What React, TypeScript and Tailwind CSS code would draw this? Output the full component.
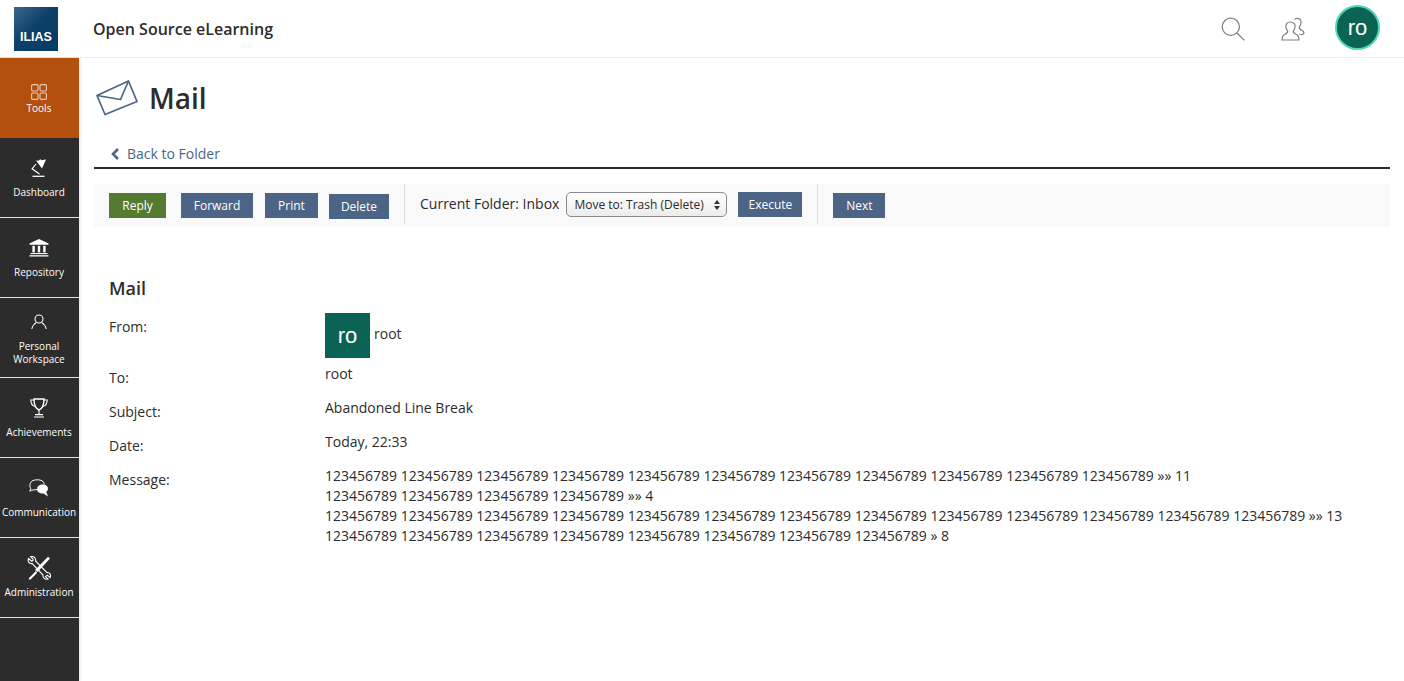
const font = { fontFamily: '"Open Sans", sans-serif' };
const avatarFont = { fontFamily: '"Liberation Sans", sans-serif' };

function ToolsIcon() {
  return (
    <svg width="16" height="16" viewBox="0 0 16 16" fill="none" stroke="#eccdb6" strokeWidth="1.1">
      <rect x="0.6" y="0.6" width="6.4" height="6.4" rx="1.2" />
      <rect x="9" y="0.6" width="6.4" height="6.4" rx="1.2" />
      <rect x="0.6" y="9" width="6.4" height="6.4" rx="1.2" />
      <rect x="9" y="9" width="6.4" height="6.4" rx="1.2" />
    </svg>
  );
}

function DashboardIcon() {
  return (
    <svg width="16" height="20" viewBox="0 0 16 20" fill="none" stroke="#fff" strokeWidth="1.1">
      <path d="M5 2.5 L7.5 2.8 L9.5 1 L10 2.2 L15 1.5 L11 10.5 Z" fill="#fff" stroke="none" />
      <path d="M5 6 L1 10.8 L8.5 16" />
      <path d="M1.5 18.3 H13.5" strokeWidth="1.3" />
    </svg>
  );
}

function RepositoryIcon() {
  return (
    <svg width="20" height="18" viewBox="0 0 20 18" fill="#fff">
      <path d="M10 0 L19.5 4.6 V5.8 H0.5 V4.6 Z" />
      <rect x="3.4" y="6.8" width="2.4" height="6.6" />
      <rect x="8.8" y="6.8" width="2.4" height="6.6" />
      <rect x="14.2" y="6.8" width="2.4" height="6.6" />
      <rect x="1.5" y="14" width="17" height="1.1" />
      <rect x="0.5" y="16.2" width="19" height="1.3" />
    </svg>
  );
}

function PersonIcon() {
  return (
    <svg width="16" height="16" viewBox="0 0 16 16" fill="none" stroke="#fff" strokeWidth="1.1">
      <circle cx="8" cy="5" r="4" />
      <path d="M5.2 8.6 C3 10 1.5 11.5 0.8 15 M10.8 8.6 C13 10 14.5 11.5 15.2 15" />
    </svg>
  );
}

function TrophyIcon() {
  return (
    <svg width="18" height="20" viewBox="0 0 18 20" fill="none" stroke="#fff" strokeWidth="1.1">
      <path d="M4 1 H14 C14 6 13.5 10 9 12 C4.5 10 4 6 4 1 Z" fill="#2c2c2c" strokeWidth="1.4" />
      <path d="M4 2 H0.8 C0.8 5 2 7.5 5 8.5 M14 2 H17.2 C17.2 5 16 7.5 13 8.5" />
      <path d="M9 12 V17" />
      <path d="M5 16.6 H13 M4 19 H14" />
    </svg>
  );
}

function CommunicationIcon() {
  return (
    <svg width="20" height="19" viewBox="0 0 20 19" fill="none" stroke="#fff" strokeWidth="1">
      <path d="M8.5 10.5 C5 11 2.6 11 2.2 11.5 L0.8 12.2 L1.8 9.5 C0.5 8 0.3 3 4 1.5 C7 0.4 12 0.4 14 2.5 C15 3.5 15.2 4.6 15 5.5" />
      <path d="M12.5 5.5 C16 5.2 19 6.8 19 9.5 C19 11 18.3 12 17.2 12.8 L19 17.5 L14.5 14.5 C11 14.8 8 13 8 10 C8 7.5 10 5.7 12.5 5.5 Z" fill="#fff" stroke="none" />
    </svg>
  );
}

function AdminIcon() {
  return (
    <svg width="24" height="24" viewBox="0 0 24 24" fill="none" stroke="#fff">
      <path d="M23 2.5 L21 0.8 L8 14 L10.5 16 Z" fill="#fff" stroke="none" />
      <path d="M2 22 L9 15 L10 17 L3.5 23.5 C2.5 24 1.3 23 2 22 Z" fill="#fff" stroke="none" />
      <path d="M1.5 2.5 L4.8 5.2 L6 4.4 L6 3 L3.6 0.8 C6 -0.2 9.2 1.6 8.6 5 L20 16.6 C22.6 16 24.4 19 23 21.6 L20.4 19.2 L18.6 20.6 L21 23 C18 24 15.4 21.6 16 19 L5 7.4 C2.5 8.2 0.4 5.6 1.5 2.5 Z" strokeWidth="1.1" />
    </svg>
  );
}

function MailIcon() {
  return (
    <svg width="42" height="36" viewBox="0 0 42 36" fill="none" stroke="#4c6586" strokeWidth="1.7" strokeLinejoin="round">
      <path d="M1 15.5 L32.5 1 L41 21.5 L9 34.5 Z" />
      <path d="M1 15.5 L24.5 19.5 L32.5 1" />
    </svg>
  );
}

function SearchIcon() {
  return (
    <svg width="24" height="24" viewBox="0 0 24 24" fill="none" stroke="#7f7f7f" strokeWidth="1.3">
      <circle cx="9.8" cy="9.8" r="8.6" />
      <path d="M16 16 L23.4 23.4" />
    </svg>
  );
}

function UsersIcon() {
  return (
    <svg width="24" height="24" viewBox="0 0 24 24" fill="none" stroke="#7f7f7f" strokeWidth="1.2" strokeLinejoin="round">
      <path d="M13.5 2.5 C14.5 0.8 18.5 0.8 19.5 3 C20.5 5.3 19.5 8.5 18.3 10 C18 11.5 19 12.5 21 13.5 C23.3 14.6 23.6 16.5 21.5 17.5 H18.5" />
      <path d="M9.5 5 C13 5 14.5 7.5 14 10.5 C13.7 12 13 13.3 12.3 14 C12 15.5 13 16.3 15 17.3 C17.3 18.4 18 19.5 18 23 H1 C1 19.5 1.8 18.4 4 17.3 C6 16.3 7 15.5 6.7 14 C6 13.3 5.3 12 5 10.5 C4.5 7.5 6 5 9.5 5 Z" />
    </svg>
  );
}

const navItems = [
  { label: "Dashboard", icon: <DashboardIcon /> },
  { label: "Repository", icon: <RepositoryIcon /> },
  { label: "Personal Workspace", icon: <PersonIcon /> },
  { label: "Achievements", icon: <TrophyIcon /> },
  { label: "Communication", icon: <CommunicationIcon /> },
  { label: "Administration", icon: <AdminIcon /> },
];

const rows = [
  { label: "To:", value: "root" },
  { label: "Subject:", value: "Abandoned Line Break" },
  { label: "Date:", value: "Today, 22:33" },
];

const n = "123456789";
const messageLines = [
  Array(11).fill(n).join(" ") + " »» 11",
  Array(4).fill(n).join(" ") + " »» 4",
  Array(13).fill(n).join(" ") + " »» 13",
  Array(8).fill(n).join(" ") + " » 8",
];

function Btn({ children, className = "" }: { children: string; className?: string }) {
  return (
    <button className={`h-[25px] bg-[#4c6586] text-[12px] text-white ${className}`}>{children}</button>
  );
}

export default function App() {
  return (
    <div style={font} className="flex h-[681px] w-[1404px] flex-col overflow-hidden bg-white text-[14px] text-[#2c2c2c]">
      <header className="flex h-[58px] shrink-0 items-center border-b border-[#ececec] pr-[24px]">
        <div className="ml-[14px] flex h-[44px] w-[44px] items-end justify-center bg-[linear-gradient(135deg,#3d6690_0%,#0d4068_45%,#033c66_100%)] pb-[7px] text-[12.5px] leading-none font-bold text-white" style={avatarFont}>
          ILIAS
        </div>
        <div className="ml-[35px] text-[16px] font-semibold">Open Source eLearning</div>
        <div className="ml-auto flex items-center">
          <SearchIcon />
          <div className="ml-[36px]"><UsersIcon /></div>
          <div style={avatarFont} className="mb-[3px] ml-[30px] flex h-[45px] w-[45px] items-center justify-center rounded-full border-2 border-[#4fd8b8] bg-[#0b6353] text-[22px] text-white">ro</div>
        </div>
      </header>

      <div className="flex min-h-0 flex-1">
        <nav className="relative w-[79px] shrink-0 bg-[#2c2c2c] pr-[1px] text-white shadow-[1px_0_3px_rgba(0,0,0,0.12)]">
          <div className="-mr-[1px] flex h-[80px] flex-col items-center bg-[#b54f0e] pt-[26px] pr-[1px]">
            <ToolsIcon />
            <span className="mt-[1px] text-[10px] leading-[14px]">Tools</span>
          </div>
          {navItems.map((item) => (
            <div key={item.label} className="-mr-[1px] flex h-[80px] flex-col items-center justify-center border-b border-[#e0e0e0] pr-[1px] text-center">
              <div className="flex h-[24px] w-full shrink-0 items-center justify-center">{item.icon}</div>
              <span className="mt-[6px] text-[10px] leading-[13px]">{item.label}</span>
            </div>
          ))}
        </nav>

        <main className="min-w-0 flex-1 pl-[15px] pr-[14px]">
          <div className="flex h-[80px] items-start pt-[22px] pl-[2px]">
            <MailIcon />
            <h1 className="ml-[11px] text-[28px] leading-[36px] font-semibold">Mail</h1>
          </div>
          <div className="flex h-[31px] items-center border-b-2 border-[#2c2c2c] pt-[2px] pl-[16px] text-[#4c6586]">
            <svg width="10" height="12" viewBox="0 0 10 12" fill="none" stroke="#4c6586" strokeWidth="2.6"><path d="M8 1 L3 6 L8 11" /></svg>
            <span className="ml-[7px]">Back to Folder</span>
          </div>

          <div className="mt-[15px] flex h-[43px] items-start bg-[#f9f9f9] pl-[15px]">
            <Btn className="mt-[9px] w-[57px] !bg-[#557a32]">Reply</Btn>
            <Btn className="mt-[9px] ml-[15px] w-[72px]">Forward</Btn>
            <Btn className="mt-[9px] ml-[12px] w-[53px]">Print</Btn>
            <Btn className="mt-[10px] ml-[11px] w-[60px]">Delete</Btn>
            <div className="ml-[15px] h-[40px] w-px bg-[#dedede]" />
            <span className="mt-[10px] ml-[15px] text-[14px] leading-[20px]">Current Folder: Inbox</span>
            <div className="relative mt-[8px] ml-[7px] h-[25px] w-[161px]">
              <select style={font} className="h-full w-full appearance-none rounded-[5px] border border-[#8a8a8a] bg-[linear-gradient(#ffffff,#ececec)] pl-[7px] text-[12px] text-[#2c2c2c]">
                <option>Move to: Trash (Delete)</option>
              </select>
              <svg className="absolute top-[8px] right-[7px]" width="6" height="10" viewBox="0 0 6 10" fill="#333"><path d="M3 0 L6 4 H0 Z M3 10 L6 6 H0 Z" /></svg>
            </div>
            <Btn className="mt-[8px] ml-[11px] w-[64px]">Execute</Btn>
            <div className="ml-[15px] h-[40px] w-px bg-[#dedede]" />
            <Btn className="mt-[9px] ml-[15px] w-[52px]">Next</Btn>
          </div>

          <div className="pt-[50px] pl-[15px]">
            <h2 className="text-[18px] leading-[22px] font-semibold">Mail</h2>
            <div className="mt-[14px] grid grid-cols-[216px_1fr] leading-[20px]">
              <div className="pt-[4px]">From:</div>
              <div className="flex items-start">
                <div style={avatarFont} className="flex h-[45px] w-[45px] items-center justify-center bg-[#0b6353] text-[22px] text-white">ro</div>
                <span className="mt-[11px] ml-[4px]">root</span>
              </div>
              {rows.map((row, i) => (
                <div key={row.label} className="contents">
                  <div className={i === 0 ? "pt-[10px]" : "pt-[14px]"}>{row.label}</div>
                  <div className={i === 0 ? "pt-[6px]" : "mt-[-4px] pt-[14px]"}>{row.value}</div>
                </div>
              ))}
              <div className="pt-[14px]">Message:</div>
              <div className="mt-[-4px] pt-[14px] whitespace-nowrap">
                {messageLines.map((line) => (
                  <div key={line}>{line}</div>
                ))}
              </div>
            </div>
          </div>
        </main>
      </div>
    </div>
  );
}
